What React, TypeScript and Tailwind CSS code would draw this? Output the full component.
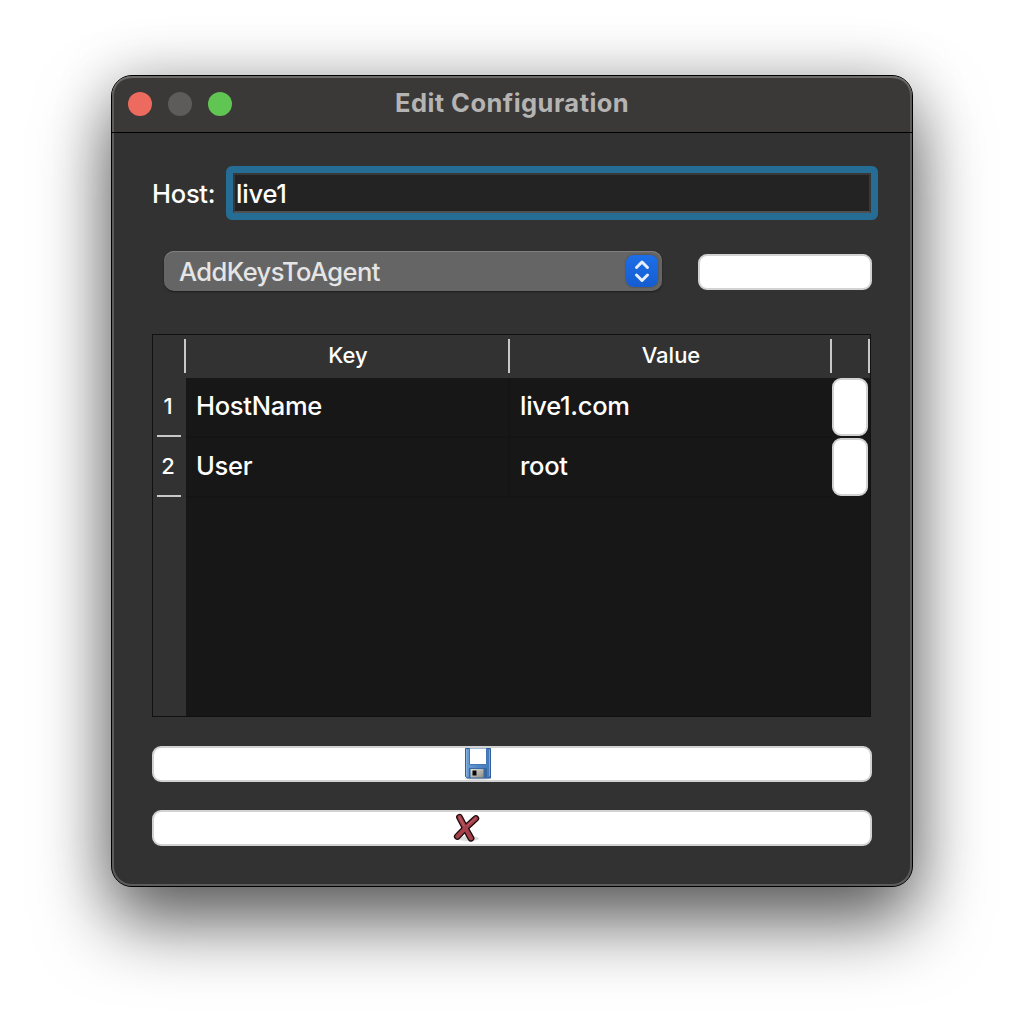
import React from "react";

const rows = [
  { key: "HostName", value: "live1.com" },
  { key: "User", value: "root" },
];

function FloppyIcon() {
  return (
    <svg width="28" height="32" viewBox="0 0 28 32" className="block">
      <defs>
        <linearGradient id="disk" x1="0" x2="1" y1="0" y2="0">
          <stop offset="0" stopColor="#6c9fd6" />
          <stop offset="0.5" stopColor="#5187c6" />
          <stop offset="1" stopColor="#4478b8" />
        </linearGradient>
        <linearGradient id="shutter" x1="0" x2="1" y1="0" y2="1">
          <stop offset="0" stopColor="#e0e0da" />
          <stop offset="1" stopColor="#8d8d85" />
        </linearGradient>
      </defs>
      <ellipse cx="14" cy="30.6" rx="13.5" ry="1" fill="#c9c9c9" />
      <path d="M1.5 .5h25v29.5H3.2L1.5 28.3z" fill="url(#disk)" stroke="#2f5f9f" />
      <path d="M2.5 1.5v26.4M25.5 1.5v26.4" stroke="#9dc1e6" strokeOpacity="0.6" />
      <path d="M5.5 0h17v16.5h-17z" fill="#fff" stroke="#4478b5" strokeWidth="1" />
      <path d="M5 20h18v10H5z" fill="#38689f" />
      <path d="M6.5 21h13v8.5h-13z" fill="url(#shutter)" />
      <path d="M8.5 22.5h4v5h-4z" fill="#080808" />
    </svg>
  );
}

function CrossIcon() {
  return (
    <svg width="28" height="30" viewBox="0 0 28 30" className="block" fill="none" strokeLinecap="round">
      <ellipse cx="15" cy="25.5" rx="11" ry="2.5" fill="#dcdcdc" />
      <g stroke="#1c0b0d" strokeWidth="6.8">
        <path d="M6.5 4.2Q11.5 14 18 25.300" />
        <path d="M22.800 5.500Q14 13 4.300 23.500" />
      </g>
      <g stroke="#a5404a" strokeWidth="4.2">
        <path d="M6.5 4.2Q11.5 14 18 25.300" />
        <path d="M22.800 5.500Q14 13 4.300 23.500" />
      </g>
      <path d="M6.200 4l5 9M22.500 5l-8 7.300" stroke="#c0646c" strokeWidth="1" />
    </svg>
  );
}

const plainButton =
  "block rounded-[9px] border-2 border-[#d2d2d2] bg-white";

export default function App() {
  return (
    <main className="flex h-[1034px] w-[1024px] items-start overflow-hidden bg-white pl-[111px] pt-[75px] font-[Inter,'Liberation_Sans',sans-serif] text-white">
      <section className="h-[812px] w-[802px] rounded-[21px] border border-black bg-[#323232] shadow-[0_36px_72px_rgba(0,0,0,0.6),0_0_60px_rgba(0,0,0,0.2)]">
        <div className="h-full rounded-[20px] shadow-[inset_0_0_0_2px_#5c5c5c]">
          <header className="flex h-[57px] items-start rounded-t-[20px] border-b border-black bg-[#3a3937] px-4 shadow-[inset_0_2px_0_#6c6b69,inset_2px_0_0_#5c5c5c,inset_-2px_0_0_#5c5c5c]">
            <div className="flex w-[266px] gap-4 pt-4">
              <span className="size-6 rounded-full bg-[#ed6a5e]" />
              <span className="size-6 rounded-full bg-[#5d5c5a]" />
              <span className="size-6 rounded-full bg-[#61c554]" />
            </div>
            <h1 className="mt-[11px] whitespace-nowrap pl-px text-[25.5px] font-bold leading-8 tracking-[0.45px] text-[#b5b4b2]">
              Edit Configuration
            </h1>
          </header>

          <div className="flex flex-col pl-10">
            <div className="mt-[33px] flex h-[54px] items-center">
              <label className="w-[74px] whitespace-nowrap pt-0.5 text-[25.5px] font-[450] leading-8 tracking-[-0.25px]">Host:</label>
              <div className="h-[54px] w-[652px] rounded-[6px] border-[7px] border-[#266d96] bg-[#232323]">
                <div className="flex h-full items-center border-2 border-[#383838] border-b-[#505050]">
                  <span className="pl-px pt-0.5 text-[25.5px] font-[450] leading-8 tracking-[-0.2px]">live1</span>
                </div>
              </div>
            </div>

            <div className="ml-3 mt-[31px] flex h-10 items-center">
              <div className="flex h-10 w-[498px] items-center justify-between rounded-[10px] bg-[#656565] pl-[15px] pr-1 shadow-[inset_0_1px_0_#808080,0_1px_2px_rgba(0,0,0,0.45)]">
                <span className="pt-0.5 text-[25.5px] font-[450] leading-8 tracking-[-0.57px] text-[#e5e5e5]">AddKeysToAgent</span>
                <span className="flex size-8 items-center justify-center rounded-[8px] bg-gradient-to-b from-[#1d6ee8] to-[#145dd0] shadow-[0_0_2px_rgba(0,0,0,0.4)]">
                  <svg width="16" height="24" viewBox="0 0 16 24" fill="none" stroke="#e6eefb" strokeWidth="3" strokeLinecap="round" strokeLinejoin="round">
                    <path d="M2.5 8.500 8 3l5.500 5.500M2.500 16 8 21.500 13.500 16" />
                  </svg>
                </span>
              </div>
              <button className={`${plainButton} ml-9 mt-0.5 h-9 w-[174px]`} aria-label="Add" />
            </div>

            <div className="mt-[43px] flex h-[383px] w-[719px] border border-[#111]">
              <div className="w-[33px] pt-[43px]">
                {rows.map((row, i) => (
                  <div key={row.key} className="h-[60px] pl-1">
                    <div className="h-[57px] w-[22px] text-center text-[22px] font-medium leading-[56px]">{i + 1}</div>
                    <div className="h-0.5 w-6 bg-[#c8c8c8]" />
                  </div>
                ))}
              </div>
              <div className="flex min-w-0 flex-1 flex-col">
                <div className="-ml-0.5 flex h-[43px] pt-1 text-center text-[22px] font-medium leading-8">
                  <div className="h-[34px] w-[324px] border-l-2 border-[#c8c8c8] pl-0.5">Key</div>
                  <div className="h-[34px] w-[322px] border-l-2 border-[#c8c8c8] pl-0.5">Value</div>
                  <div className="h-[34px] w-10 border-x-2 border-[#c8c8c8]" />
                </div>
                <div className="flex-1 bg-[#171717]">
                  {rows.map((row) => (
                    <div key={row.key} className="flex h-[60px] text-[25.5px] font-[450] leading-[56px] tracking-[-0.28px]">
                      <div className="w-[324px] border-b-2 border-r-2 border-[#141414] pl-[10px]">{row.key}</div>
                      <div className="w-[322px] border-b-2 border-[#141414] pl-[10px]">{row.value}</div>
                      <button className="h-[58px] w-9 rounded-[9px] border-2 border-[#d2d2d2] bg-white" aria-label="Remove" />
                    </div>
                  ))}
                </div>
              </div>
            </div>

            <button className={`${plainButton} mt-[29px] h-9 w-[720px] pl-[310px]`} aria-label="Save">
              <FloppyIcon />
            </button>
            <button className={`${plainButton} mt-7 h-9 w-[720px] pl-[299px]`} aria-label="Cancel">
              <CrossIcon />
            </button>
          </div>
        </div>
      </section>
    </main>
  );
}
